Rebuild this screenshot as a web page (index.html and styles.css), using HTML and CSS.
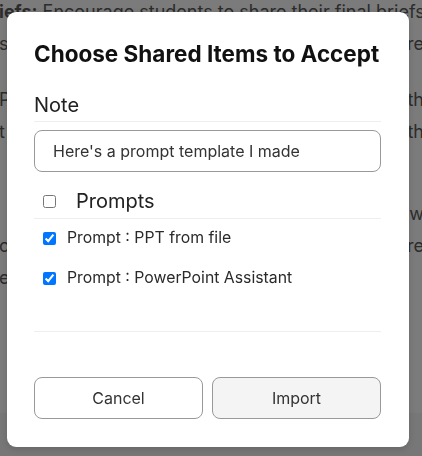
FILE: index.html
```html
<!DOCTYPE html>
<html lang="en">
<head>
  <meta charset="UTF-8" />
  <meta name="viewport" content="width=device-width, initial-scale=1.0" />
  <title>Choose Shared Items</title>
  <link rel="stylesheet" href="styles.css">
</head>
<body>
  <div class="page">
    <p class="para first">
      <span class="line plain"><b>iefs:</b> Encourage students to share their final briefs</span>
      <span class="line">s with peers and give feedback to re</span>
    </p>
    <p class="para second">
      <span class="line">Pair each brief with a reflection on th</span>
      <span class="line">t they learned from the revisions th</span>
    </p>
    <p class="para third">
      <span class="line indent">Use the assistant to draft a self-w</span>
      <span class="line">one slide that students present to re</span>
      <span class="line plain">each group and close with a review</span>
    </p>
    <div class="footer"></div>
  </div>

  <div class="modal">
    <h2 class="title">Choose Shared Items to Accept</h2>
    <label class="note-label" for="note">Note</label>
    <input class="note-input" id="note" type="text" value="Here's a prompt template I made" />

    <div class="group-row">
      <input type="checkbox" id="allPrompts" />
      <label for="allPrompts">Prompts</label>
    </div>

    <div class="items">
      <div class="item">
        <input type="checkbox" id="p1" checked />
        <label for="p1">Prompt : PPT from file</label>
      </div>
      <div class="item">
        <input type="checkbox" id="p2" checked />
        <label for="p2">Prompt : PowerPoint Assistant</label>
      </div>
    </div>

    <div class="actions">
      <button class="btn">Cancel</button>
      <button class="btn primary">Import</button>
    </div>
  </div>
</body>
</html>
```

FILE: styles.css
```css
html, body {
  margin: 0;
  height: 100%;
  overflow: hidden;
}

body {
  font-family: Inter, "Noto Sans", sans-serif;
  background: #7b7b7b;
  color: #2c2c2c;
}

/* page behind the dialog */
.page {
  width: 425px;
  margin-left: -1px;
  font-size: 18px;
  line-height: 32px;
}

.para {
  margin: 0;
}

.para.first {
  margin-top: -4px;
}

.para.second {
  margin-top: 24px;
}

.para.third {
  margin-top: 50px;
}

.line {
  display: block;
  height: 32px;
  overflow: hidden;
  text-align: justify;
  text-align-last: justify;
}

.line.plain {
  white-space: nowrap;
  text-align: left;
  text-align-last: left;
}

.line.indent {
  padding-left: 9px;
}

.footer {
  position: fixed;
  left: 0;
  right: 0;
  top: 413px;
  bottom: 0;
  background: #777;
}

/* dialog */
.modal {
  position: fixed;
  left: 7px;
  top: 12px;
  width: 402px;
  box-sizing: border-box;
  background: #fff;
  border-radius: 9px;
  padding: 28px 28px 28px 27px;
  box-shadow: 0 2px 6px rgba(0, 0, 0, 0.15);
  display: flex;
  flex-direction: column;
}

.title {
  margin: 0;
  font-size: 22.5px;
  line-height: 27px;
  font-weight: 700;
  color: #111;
  white-space: nowrap;
}

.note-label {
  margin-top: 26px;
  font-size: 20px;
  line-height: 24px;
  color: #222;
  padding-bottom: 4px;
  border-bottom: 1px solid #eee;
}

.note-input {
  margin-top: 8px;
  height: 42px;
  box-sizing: border-box;
  border: 1px solid #999;
  border-radius: 8px;
  padding: 0 18px;
  font-family: inherit;
  font-size: 16px;
  color: #333;
  outline: none;
}

.group-row {
  margin-top: 17px;
  display: flex;
  align-items: center;
  gap: 20px;
  padding: 0 0 5px 9px;
  border-bottom: 1px solid #eee;
  font-size: 20px;
  line-height: 24px;
  color: #222;
}

.group-row input,
.item input {
  margin: 0;
  width: 13px;
  height: 13px;
}

.items {
  height: 113px;
  box-sizing: border-box;
  padding: 9px 0 0 9px;
  border-bottom: 1px solid #eee;
  display: flex;
  flex-direction: column;
  gap: 20px;
}

.item {
  display: flex;
  align-items: center;
  gap: 11px;
  font-size: 15.8px;
  line-height: 20px;
  color: #2a2a2a;
}

.actions {
  margin-top: 45px;
  display: grid;
  grid-template-columns: 1fr 1fr;
  gap: 9px;
}

.btn {
  height: 42px;
  border: 1px solid #999;
  border-radius: 8px;
  background: #fff;
  font-family: inherit;
  font-size: 16px;
  color: #333;
  cursor: pointer;
}

.btn.primary {
  background: #f4f4f4;
}
```
